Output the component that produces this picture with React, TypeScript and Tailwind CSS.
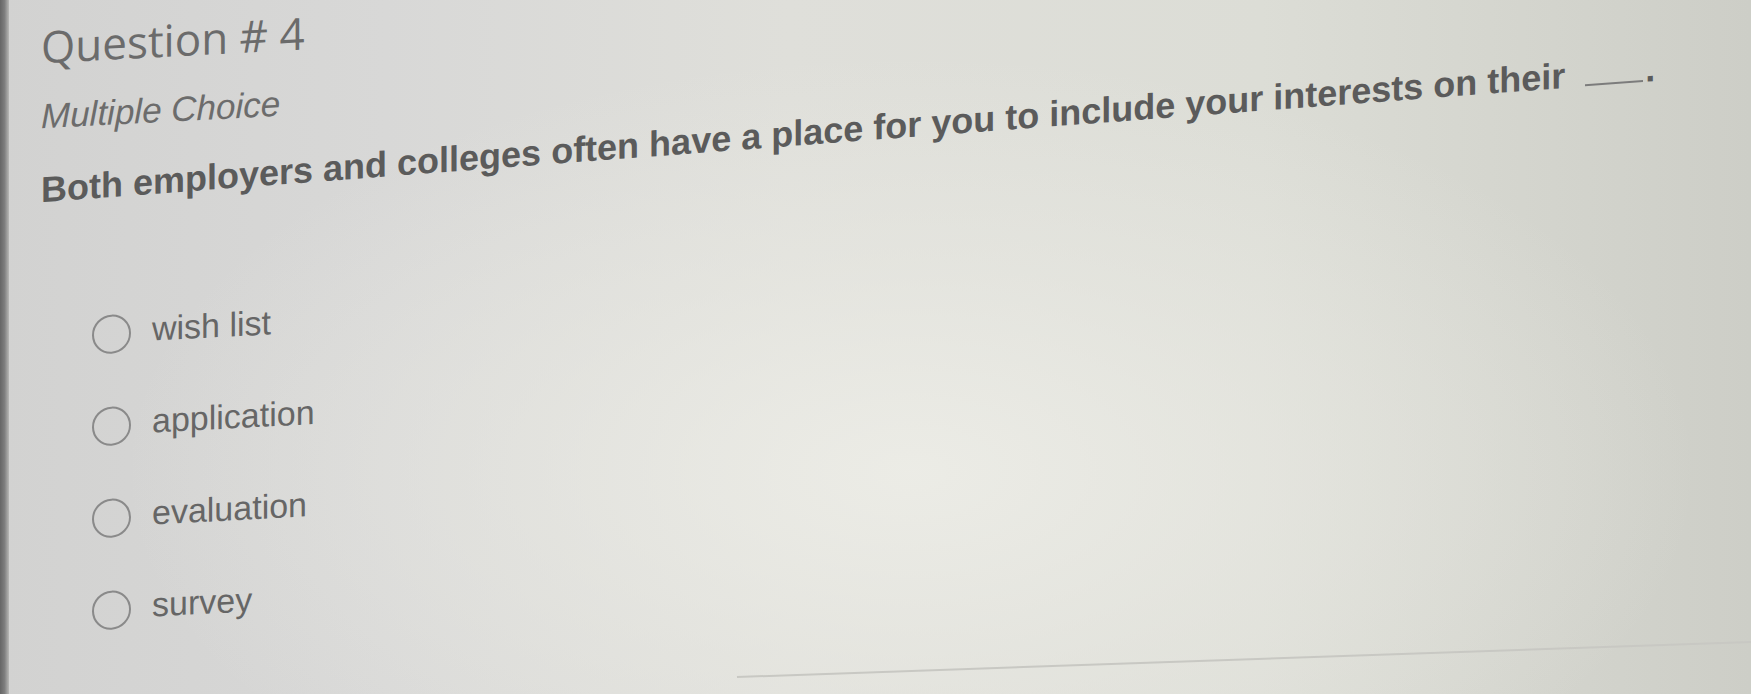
const options = ['wish list', 'application', 'evaluation', 'survey'];

export default function App() {
  return (
    <div className="relative h-[694px] w-[1751px] overflow-hidden bg-[radial-gradient(ellipse_45%_60%_at_52%_68%,rgba(238,238,232,0.85)_0%,rgba(234,234,228,0.5)_50%,rgba(230,230,224,0)_100%),linear-gradient(90deg,#d2d2d1_0%,#d8d8d7_22%,#dfdfda_45%,#dcddd6_72%,#cdcec7_100%)]">
      <div className="flex h-full">
        {/* dark screen edge on the left */}
        <div className="w-[9px] shrink-0 bg-gradient-to-r from-[#666666] via-[#7e7e7e] to-[#b8b8b6]" />

        <div className="origin-top-left -skew-y-[3deg] pl-[32px] pt-[26px]">
          <h1 className="font-['Open_Sans',sans-serif] text-[44px] leading-[44px] font-normal text-[#6b6b6b]">
            Question # 4
          </h1>

          <p className="mt-[30px] font-['Liberation_Sans',Arial,sans-serif] text-[35px] leading-[35px] italic text-[#6c6c6c]">
            Multiple Choice
          </p>

          <p className="mt-[39px] origin-left -skew-y-[1.3deg] whitespace-nowrap font-['Liberation_Sans',Arial,sans-serif] text-[36px] leading-[36px] font-bold text-[#5b5b5b]">
            Both employers and colleges often have a place for you to include your interests on their
            <span className="ml-[20px] inline-block h-[4px] w-[58px] border-b-2 border-[#7c7c7c]" />
            <span className="ml-[2px]">.</span>
          </p>

          <ul className="ml-[51px] mt-[110px] flex flex-col gap-[53px]">
            {options.map((o) => (
              <li key={o} className="flex h-[39px] items-center gap-[21px]">
                <span className="h-[39px] w-[39px] shrink-0 rounded-full border-2 border-[#8a8a8a]" />
                <span className="mb-[8px] font-['Liberation_Sans',Arial,sans-serif] text-[34px] leading-[34px] text-[#666666]">
                  {o}
                </span>
              </li>
            ))}
          </ul>
        </div>
      </div>

      {/* faint edge line across the bottom of the photo */}
      <svg className="pointer-events-none absolute inset-0" width="1751" height="694" viewBox="0 0 1751 694">
        <path d="M737 677 L1751 642" stroke="#c8c8c3" strokeWidth="2" fill="none" />
      </svg>
    </div>
  );
}
